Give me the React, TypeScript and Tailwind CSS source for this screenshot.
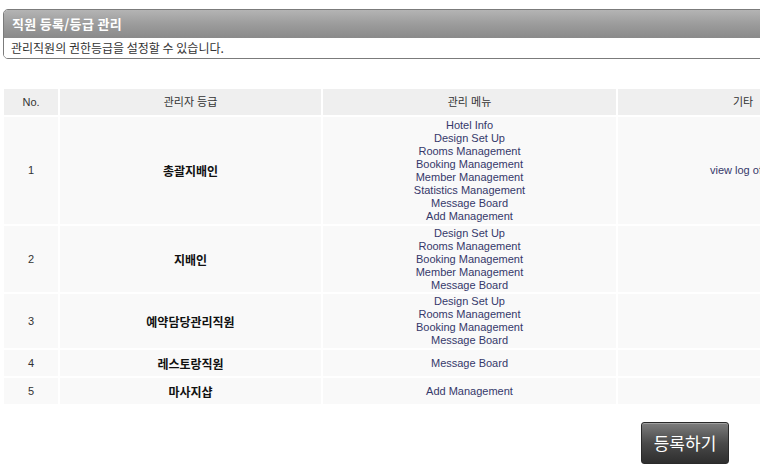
import React from "react";

const rows = [
  { no: "1", name: "총괄지배인", menus: ["Hotel Info", "Design Set Up", "Rooms Management", "Booking Management", "Member Management", "Statistics Management", "Message Board", "Add Management"], etc: "view log of all", h: "h-[107px]" },
  { no: "2", name: "지배인", menus: ["Design Set Up", "Rooms Management", "Booking Management", "Member Management", "Message Board"], etc: "", h: "h-[66px]" },
  { no: "3", name: "예약담당관리직원", menus: ["Design Set Up", "Rooms Management", "Booking Management", "Message Board"], etc: "", h: "h-[54px]" },
  { no: "4", name: "레스토랑직원", menus: ["Message Board"], etc: "", h: "h-[26px]" },
  { no: "5", name: "마사지샵", menus: ["Add Management"], etc: "", h: "h-[26px]" },
];

export default function App() {
  return (
    <div className="w-[760px] h-[475px] overflow-hidden bg-white relative font-['Liberation_Sans','Noto_Sans_CJK_KR',sans-serif]">
      <div className="pt-[9px] pl-[3px]">
        <div className="w-[900px] border border-[#7b7b7b] rounded-[5px] overflow-hidden">
          <div className="h-[28px] bg-gradient-to-b from-[#b4b4b4] via-[#9c9c9c] to-[#8a8a8a] flex items-center pl-[8px]">
            <span className="text-white text-[13px] font-bold font-['Noto_Sans_CJK_KR',sans-serif] tracking-[0.3px]">직원 등록/등급 관리</span>
          </div>
          <div className="h-[20px] bg-white flex items-center pl-[7px]">
            <span className="text-[#333] text-[12px] leading-none font-['Noto_Sans_CJK_KR',sans-serif]">관리직원의 권한등급을 설정할 수 있습니다.</span>
          </div>
        </div>
      </div>

      <table className="mt-[28px] ml-[2px] border-separate border-spacing-[2px] w-[868px] table-fixed text-[11px]">
        <thead>
          <tr className="h-[26px]">
            <th className="w-[54px] bg-[#efefef] font-normal text-[#333] text-center align-middle">No.</th>
            <th className="w-[261px] bg-[#efefef] font-normal text-[#333] text-center align-middle">관리자 등급</th>
            <th className="w-[293px] bg-[#efefef] font-normal text-[#333] text-center align-middle">관리 메뉴</th>
            <th className="w-[250px] bg-[#efefef] font-normal text-[#333] text-center align-middle">기타</th>
          </tr>
        </thead>
        <tbody>
          {rows.map((r) => (
            <tr key={r.no} className={r.h}>
              <td className="bg-[#f9f9f9] text-center align-middle text-[#333] leading-[13px]">{r.no}</td>
              <td className="bg-[#f9f9f9] text-center align-middle text-[#111] text-[12px] leading-[13px] font-bold font-['Noto_Sans_CJK_KR',sans-serif]">{r.name}</td>
              <td className="bg-[#f9f9f9] text-center align-middle text-[#35386a] leading-[13px]">
                {r.menus.map((m, i) => (
                  <div key={i}>{m}</div>
                ))}
              </td>
              <td className="bg-[#f9f9f9] text-center align-middle text-[#35386a] leading-[13px] whitespace-nowrap">{r.etc}</td>
            </tr>
          ))}
        </tbody>
      </table>

      <div className="flex justify-end pr-[31px] mt-[16px]">
        <button className="w-[88px] h-[42px] rounded-[3px] border border-[#2a2a2a] bg-gradient-to-b from-[#7e7e7e] via-[#4a4a4a] to-[#2e2e2e] text-white text-[17px] font-['Noto_Sans_CJK_KR',sans-serif] flex items-center justify-center shadow-[inset_0_1px_0_#a0a0a0]">
          등록하기
        </button>
      </div>
    </div>
  );
}
